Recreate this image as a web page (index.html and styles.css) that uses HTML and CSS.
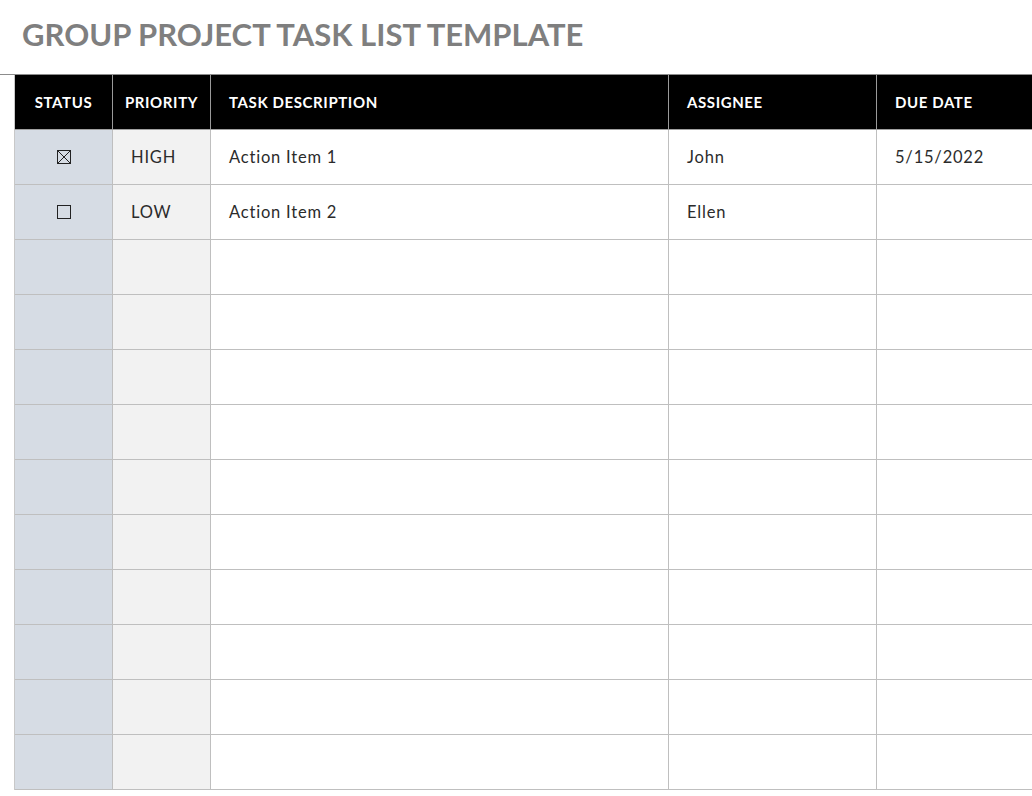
FILE: index.html
```html
<!DOCTYPE html>
<html>
<head>
<meta charset="utf-8">
<link rel="stylesheet" href="styles.css">
</head>
<body>
<div class="page">
  <h1 class="title">GROUP PROJECT TASK LIST TEMPLATE</h1>
  <div class="sheet">
    <div class="grid">
      <div class="row head">
        <div class="cell c-status">STATUS</div>
        <div class="cell c-priority center">PRIORITY</div>
        <div class="cell c-task">TASK DESCRIPTION</div>
        <div class="cell c-assignee">ASSIGNEE</div>
        <div class="cell c-due">DUE DATE</div>
      </div>
      <div class="row">
        <div class="cell c-status"><svg class="box" width="14" height="14" viewBox="0 0 14 14"><rect x="0.5" y="0.5" width="13" height="13" fill="none" stroke="#222" stroke-width="1"/><path d="M1 1 L13 13 M13 1 L1 13" stroke="#222" stroke-width="1"/></svg></div>
        <div class="cell c-priority">HIGH</div>
        <div class="cell c-task">Action Item 1</div>
        <div class="cell c-assignee">John</div>
        <div class="cell c-due">5/15/2022</div>
      </div>
      <div class="row">
        <div class="cell c-status"><svg class="box" width="14" height="14" viewBox="0 0 14 14"><rect x="0.5" y="0.5" width="13" height="13" fill="none" stroke="#222" stroke-width="1"/></svg></div>
        <div class="cell c-priority">LOW</div>
        <div class="cell c-task">Action Item 2</div>
        <div class="cell c-assignee">Ellen</div>
        <div class="cell c-due"></div>
      </div>
      <div class="row"><div class="cell c-status"></div><div class="cell c-priority"></div><div class="cell c-task"></div><div class="cell c-assignee"></div><div class="cell c-due"></div></div>
      <div class="row"><div class="cell c-status"></div><div class="cell c-priority"></div><div class="cell c-task"></div><div class="cell c-assignee"></div><div class="cell c-due"></div></div>
      <div class="row"><div class="cell c-status"></div><div class="cell c-priority"></div><div class="cell c-task"></div><div class="cell c-assignee"></div><div class="cell c-due"></div></div>
      <div class="row"><div class="cell c-status"></div><div class="cell c-priority"></div><div class="cell c-task"></div><div class="cell c-assignee"></div><div class="cell c-due"></div></div>
      <div class="row"><div class="cell c-status"></div><div class="cell c-priority"></div><div class="cell c-task"></div><div class="cell c-assignee"></div><div class="cell c-due"></div></div>
      <div class="row"><div class="cell c-status"></div><div class="cell c-priority"></div><div class="cell c-task"></div><div class="cell c-assignee"></div><div class="cell c-due"></div></div>
      <div class="row"><div class="cell c-status"></div><div class="cell c-priority"></div><div class="cell c-task"></div><div class="cell c-assignee"></div><div class="cell c-due"></div></div>
      <div class="row"><div class="cell c-status"></div><div class="cell c-priority"></div><div class="cell c-task"></div><div class="cell c-assignee"></div><div class="cell c-due"></div></div>
      <div class="row"><div class="cell c-status"></div><div class="cell c-priority"></div><div class="cell c-task"></div><div class="cell c-assignee"></div><div class="cell c-due"></div></div>
      <div class="row"><div class="cell c-status"></div><div class="cell c-priority"></div><div class="cell c-task"></div><div class="cell c-assignee"></div><div class="cell c-due"></div></div>
    </div>
  </div>
</div>
</body>
</html>
```

FILE: styles.css
```css
html, body {
  margin: 0;
  padding: 0;
  background: #ffffff;
  overflow: hidden;
}
.page {
  width: 1032px;
  height: 796px;
  overflow: hidden;
  font-family: "Lato", "DejaVu Sans", sans-serif;
}
.title {
  margin: 0;
  height: 74px;
  box-sizing: border-box;
  padding: 15px 0 0 22px;
  font-size: 31px;
  font-weight: 700;
  color: #7f7f7f;
  letter-spacing: 0;
  line-height: 38px;
}
.sheet {
  border-top: 1px solid #8c8c8c;
  padding-left: 14px;
}
.grid {
  border-left: 1px solid #c8c8c8;
}
.row {
  display: grid;
  grid-template-columns: 98px 98px 458px 208px 1fr;
  height: 55px;
  border-bottom: 1px solid #bfbfbf;
  box-sizing: border-box;
}
.row.head {
  height: 55px;
  background: #000000;
  border-bottom: 1px solid #a0a0a0;
}
.cell {
  border-right: 1px solid #bfbfbf;
  box-sizing: border-box;
  display: flex;
  align-items: center;
  padding-left: 18px;
  font-size: 16.5px;
  letter-spacing: 0.8px;
  color: #2b2b2b;
}
.head .cell {
  color: #ffffff;
  font-weight: 700;
  font-size: 15px;
  letter-spacing: 0.6px;
  border-right-color: #9a9a9a;
}
.head .c-status, .head .c-priority {
  justify-content: center;
  padding-left: 0;
}
.c-status {
  background: #d6dce4;
  justify-content: center;
  padding-left: 0;
}
.head .c-status, .head .c-priority {
  background: #000000;
}
.c-priority {
  background: #f2f2f2;
}
.c-due {
  border-right: none;
}
.box {
  display: block;
}
```
